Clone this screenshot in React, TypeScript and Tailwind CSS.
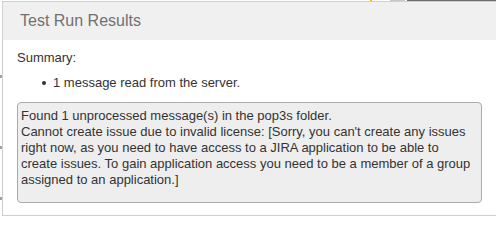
import React from "react";

export default function App() {
  return (
    <div
      className="w-[496px] h-[218px] overflow-hidden bg-white flex flex-col"
      style={{ fontFamily: '"Liberation Sans", Arial, sans-serif' }}
    >
      {/* backdrop page edge (top) */}
      <div className="h-[1px] flex shrink-0">
        <div className="w-[370px]" />
        <div className="w-[2px] bg-[#f2c300]" />
        <div className="w-[18px]" />
        <div className="w-[15px] bg-[#c8c8c8]" />
        <div className="w-[2px]" />
        <div className="flex-1 bg-[#6b6b6b]" />
      </div>

      <div className="flex">
        {/* backdrop page edge (left) */}
        <div className="w-[2px] shrink-0 flex flex-col pt-[74px] gap-[68px]">
          <div className="h-[3px] bg-[#9aa3ad]" />
          <div className="h-[3px] bg-[#9aa3ad]" />
          <div className="h-[3px] -mt-[20px] bg-[#9aa3ad]" />
        </div>

        {/* dialog */}
        <div className="w-[510px] shrink-0 h-[215px] border border-[#cfcfcf] bg-white flex flex-col">
          <div className="h-[38px] bg-[#f0f0f0] flex items-center pl-[17px]">
            <span className="text-[16px] leading-[18px] text-[#707070]">Test Run Results</span>
          </div>
          <div className="pl-[14px] pt-[10px] text-[13px] leading-[16px] text-[#333333]">
            <div>Summary:</div>
            <div className="mt-[9px] flex items-center">
              <span className="ml-[25px] w-[4px] h-[4px] rounded-full bg-[#333333]" />
              <span className="ml-[7px]">1 message read from the server.</span>
            </div>
            <div className="mt-[11px] w-[465px] h-[101px] rounded-[4px] border border-[#ababab] bg-[#eeeeee] pl-[3px] pt-[5px] whitespace-nowrap">
              <div>Found 1 unprocessed message(s) in the pop3s folder.</div>
              <div>Cannot create issue due to invalid license: [Sorry, you can't create any issues</div>
              <div>right now, as you need to have access to a JIRA application to be able to</div>
              <div>create issues. To gain application access you need to be a member of a group</div>
              <div>assigned to an application.]</div>
            </div>
          </div>
        </div>
      </div>
    </div>
  );
}
